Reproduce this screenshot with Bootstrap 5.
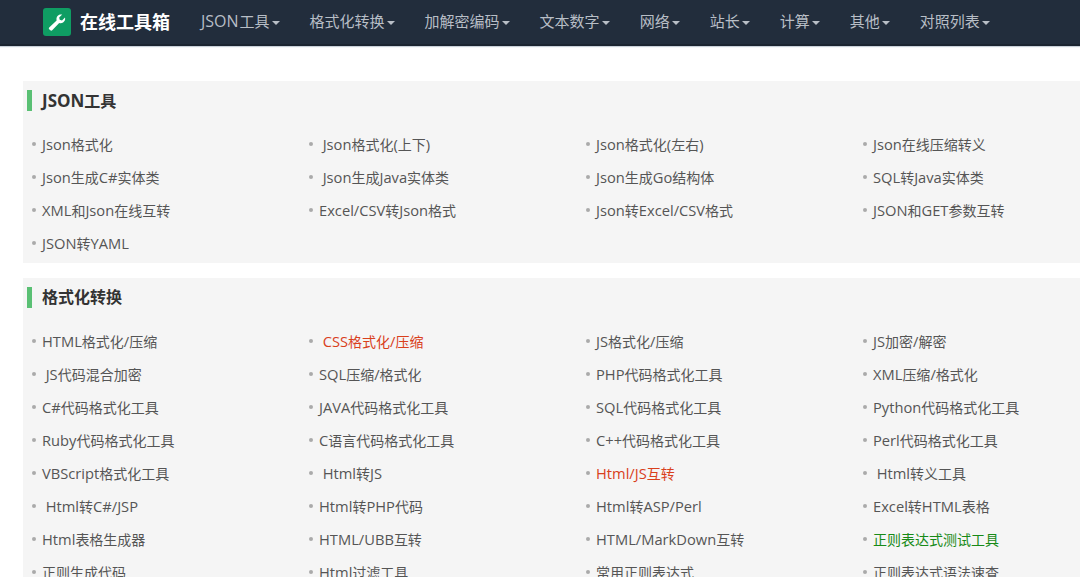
<!DOCTYPE html>
<html lang="zh-CN">
<head>
<meta charset="utf-8">
<title>在线工具箱</title>
<link href="https://cdn.jsdelivr.net/npm/bootstrap@5.3.0/dist/css/bootstrap.min.css" rel="stylesheet">
<style>
html,body{overflow:hidden;height:577px}
body{font-family:"Open Sans","Noto Sans CJK SC",sans-serif;background:#fff;color:#444;font-size:14px}
.topbar{height:46px;background:#222d3c;border-bottom:2px solid #1b2430;box-shadow:0 1px 1px #c8d0d8;padding:0 0 0 43px;flex-wrap:nowrap;justify-content:flex-start}
.logo-box{width:28px;height:28px;border-radius:3px;background:#0f9d63;flex:none}
.brand-name{color:#fff;font-size:18px;font-weight:700;line-height:28px;margin-left:9px;margin-right:16px}
.topbar .menu-link{color:#b8bec6;font-size:15px;padding:0 15px 2px;line-height:42px;white-space:nowrap;text-decoration:none;display:flex;align-items:center}
.caret-mark{display:inline-block;width:0;height:0;border-left:4px solid transparent;border-right:4px solid transparent;border-top:4px solid #b8bec6;margin-left:2px;margin-top:3px}
.tool-wrap{width:1131px;padding:35px 0 0 23px}
.tool-sec{background:#f5f5f5;margin-bottom:15px;padding-bottom:3px}
.sec-title{font-size:16px;font-weight:700;color:#333;margin:0;height:47px;display:flex;align-items:flex-start;padding:9px 0 0 4px;line-height:21px}
.sec-title::before{content:"";width:5px;height:21px;background:#5ac074;margin-right:10px;flex:none}
.tool-grid{display:grid;grid-template-columns:repeat(4,277px)}
.tool-cell{height:33px;line-height:33px;padding:0 0 1px 9px;display:flex;align-items:center;white-space:pre}
.tool-cell::before{content:"";width:4px;height:4px;background:#aaa;border-radius:50%;margin-right:6px;flex:none}
.tool-cell a{color:#555;text-decoration:none}
.tool-cell a.hot{color:#d9401c}
.tool-cell a.ok{color:#178a17}
.lat{font-size:14.7px}
.lat-nav{font-size:16px;margin-right:1px}
.lat-head{font-size:17px}
</style>
</head>
<body>
<nav class="navbar topbar">
  <div class="d-flex align-items-center">
    <span class="logo-box d-flex align-items-center justify-content-center">
      <svg width="20" height="20" viewBox="0 0 20 20"><path d="M2.2 15.4 9.6 8.4C9 6 10 3.6 12.2 2.7c1-.4 2.1-.4 3-.1l-3 2.9.5 2.3 2.3.6 3-2.9c.3 1 .2 2.1-.2 3.1-1 2.1-3.3 3-5.6 2.4l-7 7.3c-.5.5-1.3.5-1.9 0l-1.1-1c-.5-.6-.5-1.4 0-1.9z" fill="#fff"/></svg>
    </span>
    <span class="brand-name">在线工具箱</span>
  </div>
  <ul class="navbar-nav flex-row">
    <li class="nav-item"><a class="menu-link" href="#"><span><span class="lat-nav">JSON</span>工具</span><i class="caret-mark"></i></a></li>
    <li class="nav-item"><a class="menu-link" href="#">格式化转换<i class="caret-mark"></i></a></li>
    <li class="nav-item"><a class="menu-link" href="#">加解密编码<i class="caret-mark"></i></a></li>
    <li class="nav-item"><a class="menu-link" href="#">文本数字<i class="caret-mark"></i></a></li>
    <li class="nav-item"><a class="menu-link" href="#">网络<i class="caret-mark"></i></a></li>
    <li class="nav-item"><a class="menu-link" href="#">站长<i class="caret-mark"></i></a></li>
    <li class="nav-item"><a class="menu-link" href="#">计算<i class="caret-mark"></i></a></li>
    <li class="nav-item"><a class="menu-link" href="#">其他<i class="caret-mark"></i></a></li>
    <li class="nav-item"><a class="menu-link" href="#">对照列表<i class="caret-mark"></i></a></li>
  </ul>
</nav>
<main class="tool-wrap">
  <section class="tool-sec">
    <h2 class="sec-title"><span><span class="lat-head">JSON</span>工具</span></h2>
    <div class="tool-grid">
      <div class="tool-cell"><a href="#"><span class="lat">Json</span>格式化</a></div>
      <div class="tool-cell"><a href="#"> <span class="lat">Json</span>格式化<span class="lat">(</span>上下<span class="lat">)</span></a></div>
      <div class="tool-cell"><a href="#"><span class="lat">Json</span>格式化<span class="lat">(</span>左右<span class="lat">)</span></a></div>
      <div class="tool-cell"><a href="#"><span class="lat">Json</span>在线压缩转义</a></div>
      <div class="tool-cell"><a href="#"><span class="lat">Json</span>生成<span class="lat">C#</span>实体类</a></div>
      <div class="tool-cell"><a href="#"> <span class="lat">Json</span>生成<span class="lat">Java</span>实体类</a></div>
      <div class="tool-cell"><a href="#"><span class="lat">Json</span>生成<span class="lat">Go</span>结构体</a></div>
      <div class="tool-cell"><a href="#"><span class="lat">SQL</span>转<span class="lat">Java</span>实体类</a></div>
      <div class="tool-cell"><a href="#"><span class="lat">XML</span>和<span class="lat">Json</span>在线互转</a></div>
      <div class="tool-cell"><a href="#"><span class="lat">Excel/CSV</span>转<span class="lat">Json</span>格式</a></div>
      <div class="tool-cell"><a href="#"><span class="lat">Json</span>转<span class="lat">Excel/CSV</span>格式</a></div>
      <div class="tool-cell"><a href="#"><span class="lat">JSON</span>和<span class="lat">GET</span>参数互转</a></div>
      <div class="tool-cell"><a href="#"><span class="lat">JSON</span>转<span class="lat">YAML</span></a></div>
    </div>
  </section>
  <section class="tool-sec">
    <h2 class="sec-title">格式化转换</h2>
    <div class="tool-grid">
      <div class="tool-cell"><a href="#"><span class="lat">HTML</span>格式化<span class="lat">/</span>压缩</a></div>
      <div class="tool-cell"><a class="hot" href="#"> <span class="lat">CSS</span>格式化<span class="lat">/</span>压缩</a></div>
      <div class="tool-cell"><a href="#"><span class="lat">JS</span>格式化<span class="lat">/</span>压缩</a></div>
      <div class="tool-cell"><a href="#"><span class="lat">JS</span>加密<span class="lat">/</span>解密</a></div>
      <div class="tool-cell"><a href="#"> <span class="lat">JS</span>代码混合加密</a></div>
      <div class="tool-cell"><a href="#"><span class="lat">SQL</span>压缩<span class="lat">/</span>格式化</a></div>
      <div class="tool-cell"><a href="#"><span class="lat">PHP</span>代码格式化工具</a></div>
      <div class="tool-cell"><a href="#"><span class="lat">XML</span>压缩<span class="lat">/</span>格式化</a></div>
      <div class="tool-cell"><a href="#"><span class="lat">C#</span>代码格式化工具</a></div>
      <div class="tool-cell"><a href="#"><span class="lat">JAVA</span>代码格式化工具</a></div>
      <div class="tool-cell"><a href="#"><span class="lat">SQL</span>代码格式化工具</a></div>
      <div class="tool-cell"><a href="#"><span class="lat">Python</span>代码格式化工具</a></div>
      <div class="tool-cell"><a href="#"><span class="lat">Ruby</span>代码格式化工具</a></div>
      <div class="tool-cell"><a href="#"><span class="lat">C</span>语言代码格式化工具</a></div>
      <div class="tool-cell"><a href="#"><span class="lat">C++</span>代码格式化工具</a></div>
      <div class="tool-cell"><a href="#"><span class="lat">Perl</span>代码格式化工具</a></div>
      <div class="tool-cell"><a href="#"><span class="lat">VBScript</span>格式化工具</a></div>
      <div class="tool-cell"><a href="#"> <span class="lat">Html</span>转<span class="lat">JS</span></a></div>
      <div class="tool-cell"><a class="hot" href="#"><span class="lat">Html/JS</span>互转</a></div>
      <div class="tool-cell"><a href="#"> <span class="lat">Html</span>转义工具</a></div>
      <div class="tool-cell"><a href="#"> <span class="lat">Html</span>转<span class="lat">C#/JSP</span></a></div>
      <div class="tool-cell"><a href="#"><span class="lat">Html</span>转<span class="lat">PHP</span>代码</a></div>
      <div class="tool-cell"><a href="#"><span class="lat">Html</span>转<span class="lat">ASP/Perl</span></a></div>
      <div class="tool-cell"><a href="#"><span class="lat">Excel</span>转<span class="lat">HTML</span>表格</a></div>
      <div class="tool-cell"><a href="#"><span class="lat">Html</span>表格生成器</a></div>
      <div class="tool-cell"><a href="#"><span class="lat">HTML/UBB</span>互转</a></div>
      <div class="tool-cell"><a href="#"><span class="lat">HTML/MarkDown</span>互转</a></div>
      <div class="tool-cell"><a class="ok" href="#">正则表达式测试工具</a></div>
      <div class="tool-cell"><a href="#">正则生成代码</a></div>
      <div class="tool-cell"><a href="#"><span class="lat">Html</span>过滤工具</a></div>
      <div class="tool-cell"><a href="#">常用正则表达式</a></div>
      <div class="tool-cell"><a href="#">正则表达式语法速查</a></div>
    </div>
  </section>
</main>
<script src="https://cdn.jsdelivr.net/npm/bootstrap@5.3.0/dist/js/bootstrap.bundle.min.js"></script>
</body>
</html>
